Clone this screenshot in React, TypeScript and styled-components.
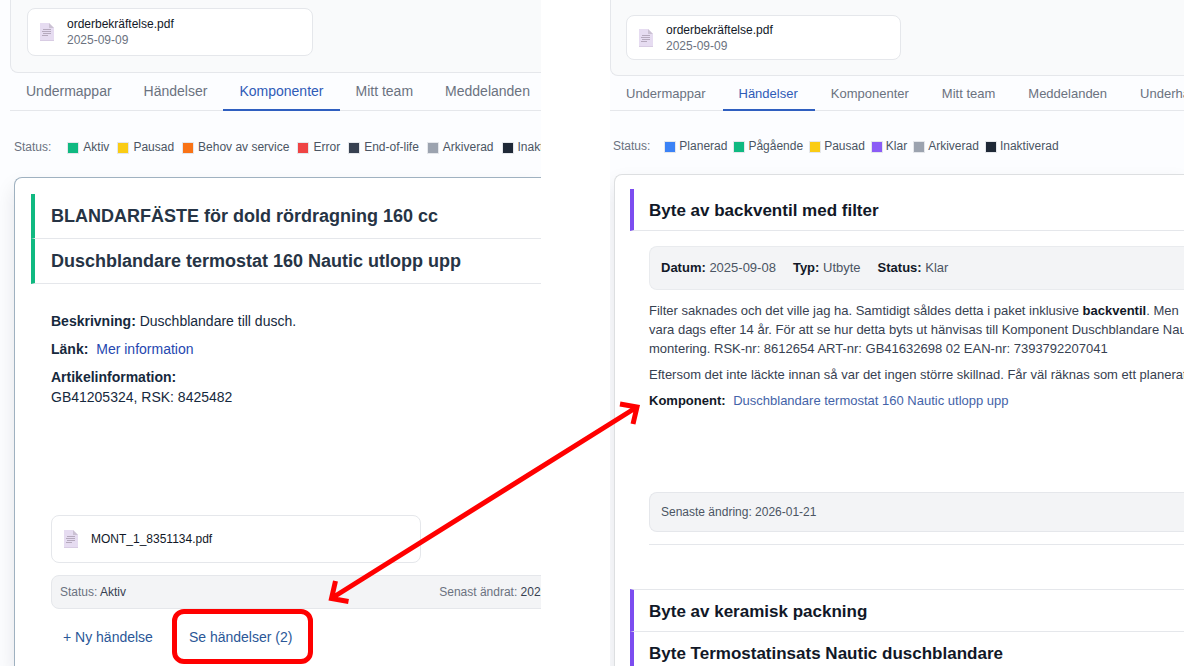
import React from "react";
import styled, { createGlobalStyle, css } from "styled-components";

const GlobalStyle = createGlobalStyle`
  *, *::before, *::after { box-sizing: border-box; }
  body {
    margin: 0;
    background: #ffffff;
    color: #1f2937;
    font-family: "Liberation Sans", Arial, sans-serif;
    font-size: 14px;
    line-height: 20px;
  }
  button { font: inherit; cursor: pointer; background: none; border: 0; padding: 0; }
  a { text-decoration: none; }
  h2, p { margin: 0; }
`;

const Stage = styled.main`
  position: relative;
  display: grid;
  grid-template-columns: minmax(0, 541fr) minmax(0, 574fr);
  column-gap: 69px;
  height: 100vh;
  overflow: hidden;
`;

/* compact panes use the slightly denser variant of every part */
type Density = { $compact?: boolean };

const Pane = styled.section<Density>`
  display: flex;
  flex-direction: column;
  min-width: 0;
  min-height: 0;
  overflow: hidden;
  background: #fcfdff;
  padding-left: ${(p) => (p.$compact ? 0 : 10)}px;
`;

const Attachments = styled.div<Density>`
  flex: none;
  padding: ${(p) => (p.$compact ? "15px 15px" : "8px 16px 16px")};
  background: #f9fafb;
  border: solid #e5e7eb;
  border-width: 0 0 1px 1px;
  border-bottom-left-radius: 8px;
`;

const FileCard = styled.a<{ $width: number; $height: number }>`
  display: flex;
  align-items: center;
  gap: 13px;
  width: ${(p) => p.$width}px;
  height: ${(p) => p.$height}px;
  padding-left: 12px;
  background: #ffffff;
  border: 1px solid #e5e7eb;
  border-radius: 8px;
  color: #111827;
  font-size: 12px;
  line-height: 16px;
`;

const FileText = styled.span`
  display: flex;
  flex-direction: column;
`;

const FileDate = styled.span`
  color: #6b7280;
`;

const Tabs = styled.nav<Density>`
  flex: none;
  display: flex;
  height: ${(p) => (p.$compact ? 35 : 38)}px;
  border-bottom: 1px solid #e5e7eb;
  font-size: ${(p) => (p.$compact ? 13 : 14)}px;
`;

const Tab = styled.button<Density & { $active?: boolean }>`
  flex: none;
  height: ${(p) => (p.$compact ? 35 : 38)}px;
  padding: ${(p) => (p.$compact ? "2px 17px 0 16px" : "0 16px")};
  border-bottom: 2px solid transparent;
  color: #6b7280;
  white-space: nowrap;
  ${(p) =>
    p.$active &&
    css`
      color: #2f5bb7;
      border-bottom-color: #2f5fc0;
    `}
`;

const Legend = styled.div<Density>`
  flex: none;
  display: flex;
  align-items: center;
  gap: ${(p) => (p.$compact ? 6 : 8)}px;
  padding: ${(p) => (p.$compact ? "27px 0 19px 3px" : "28px 0 21px 4px")};
  font-size: 12px;
  line-height: 17px;
  color: #4b5563;
  white-space: nowrap;
`;

const LegendTitle = styled.span`
  margin-right: 8px;
  color: #6b7280;
`;

const LegendItem = styled.span<Density>`
  display: flex;
  align-items: center;
  gap: ${(p) => (p.$compact ? 3 : 4)}px;
`;

const Swatch = styled.i<{ $color: string }>`
  width: 12px;
  height: 12px;
  background: ${(p) => p.$color};
  border: 1px solid #e5e7eb;
`;

const Card = styled.article<Density>`
  flex: 1 0 auto;
  margin-left: 4px;
  padding: ${(p) => (p.$compact ? "14px 0 0 15px" : "16px 0 0 16px")};
  background: #ffffff;
  border: solid ${(p) => (p.$compact ? "#dddfe1" : "#9fb1c0")};
  border-width: 1px 0 0 1px;
  border-top-left-radius: 8px;
  box-shadow: 0 10px 20px rgba(15, 23, 42, 0.1);
`;

const Entry = styled.h2<Density & { $color: string; $topLine?: boolean }>`
  padding: ${(p) => (p.$compact ? "11px 0 9px 15px" : "11px 0 11px 16px")};
  border-left: 4px solid ${(p) => p.$color};
  border-bottom: 1px solid #e5e7eb;
  border-top: ${(p) => (p.$topLine ? "1px solid #e5e7eb" : "0")};
  color: ${(p) => (p.$compact ? "#111827" : "#263445")};
  font-size: ${(p) => (p.$compact ? 17 : 18)}px;
  line-height: ${(p) => (p.$compact ? 21 : 22)}px;
  font-weight: 700;
  white-space: nowrap;
`;

const Details = styled.div<Density>`
  display: flex;
  flex-direction: column;
  padding-left: ${(p) => (p.$compact ? 19 : 20)}px;
`;

const Facts = styled.div`
  display: flex;
  flex-direction: column;
  gap: 8px;
  padding-top: 27px;
  min-height: 231px;
  color: #16293d;
`;

const TextLink = styled.a`
  margin-left: 4px;
  color: #2547b0;
`;

const StatusBar = styled.div`
  display: flex;
  justify-content: space-between;
  margin: 12px -50px 0 0;
  padding: 8px;
  border: 1px solid #e5e7eb;
  border-radius: 8px;
  background: #f3f4f6;
  color: #6b7280;
  font-size: 12px;
  line-height: 16px;
  white-space: nowrap;

  b {
    color: #374151;
    font-weight: 400;
  }
`;

const Actions = styled.div`
  display: flex;
  gap: 36px;
  padding: 18px 0 0 12px;
`;

const Action = styled.button`
  position: relative;
  color: #2b5797;
`;

const Highlight = styled.span`
  position: absolute;
  inset: -18px -21px -17px -17px;
  border: 5px solid #ff0000;
  border-radius: 12px;
  pointer-events: none;
`;

const EventMeta = styled.div`
  display: flex;
  gap: 17px;
  margin-top: 15px;
  padding: 12px 11px;
  background: #f3f4f6;
  border: solid #e9ebee;
  border-width: 1px 0 1px 1px;
  border-radius: 8px 0 0 8px;
  color: #4b5563;
  font-size: 13px;
  line-height: 18px;

  b {
    color: #111827;
  }
`;

const EventBody = styled.div`
  display: flex;
  flex-direction: column;
  gap: 7px;
  min-height: 202px;
  padding-top: 11px;
  color: #374151;
  font-size: 13px;
  line-height: 19px;
  white-space: nowrap;

  b {
    color: #111827;
  }
`;

const ComponentLink = styled(TextLink)`
  color: #4463a8;
`;

const Changed = styled.div`
  padding: 11px;
  background: #f3f4f6;
  border: solid #e5e7eb;
  border-width: 1px 0 1px 1px;
  border-radius: 8px 0 0 8px;
  color: #4b5563;
  font-size: 12px;
  line-height: 16px;
`;

const Divider = styled.hr`
  width: 100%;
  margin: 12px 0 44px;
  border: 0;
  border-top: 1px solid #e5e7eb;
`;

const Connector = styled.svg`
  position: absolute;
  top: 0;
  left: 0;
  width: 100%;
  pointer-events: none;
`;

const FileIcon = () => (
  <svg width="14" height="18" viewBox="0 0 14 18" aria-hidden="true">
    <path d="M0 0H9L14 5V18H0Z" fill="#e6dcf1" />
    <path d="M9 0L14 5H9Z" fill="#cbc1d3" />
    <path d="M0 17.5H14" stroke="#d8cce3" />
    <path d="M3 6.5H11M2 8.5H11M3 10.5H11M2 12.5H8" stroke="#b5a9bd" />
  </svg>
);

const componentStatuses = [
  ["Aktiv", "#10b981"],
  ["Pausad", "#facc15"],
  ["Behov av service", "#f97316"],
  ["Error", "#ef4444"],
  ["End-of-life", "#374151"],
  ["Arkiverad", "#9ca3af"],
  ["Inaktiverad", "#1f2937"],
];

const eventStatuses = [
  ["Planerad", "#3b82f6"],
  ["Pågående", "#10b981"],
  ["Pausad", "#facc15"],
  ["Klar", "#8b5cf6"],
  ["Arkiverad", "#9ca3af"],
  ["Inaktiverad", "#1f2937"],
];

const tabNames = ["Undermappar", "Händelser", "Komponenter", "Mitt team", "Meddelanden"];

function TabBar({ names, active, compact }: { names: string[]; active: string; compact?: boolean }) {
  return (
    <Tabs $compact={compact}>
      {names.map((name) => (
        <Tab key={name} type="button" $compact={compact} $active={name === active}>
          {name}
        </Tab>
      ))}
    </Tabs>
  );
}

function StatusLegend({ items, compact }: { items: string[][]; compact?: boolean }) {
  return (
    <Legend $compact={compact}>
      <LegendTitle>Status:</LegendTitle>
      {items.map(([label, color]) => (
        <LegendItem key={label} $compact={compact}>
          <Swatch $color={color} />
          {label}
        </LegendItem>
      ))}
    </Legend>
  );
}

function OrderFile({ width, height }: { width: number; height: number }) {
  return (
    <FileCard href="#order" $width={width} $height={height}>
      <FileIcon />
      <FileText>
        <span>orderbekräftelse.pdf</span>
        <FileDate>2025-09-09</FileDate>
      </FileText>
    </FileCard>
  );
}

export default function App() {
  return (
    <>
      <GlobalStyle />
      <Stage>
        <Pane>
          <Attachments>
            <OrderFile width={286} height={48} />
          </Attachments>
          <TabBar names={tabNames} active="Komponenter" />
          <StatusLegend items={componentStatuses} />
          <Card>
            <Entry $color="#10b981">BLANDARFÄSTE för dold rördragning 160 cc</Entry>
            <Entry $color="#10b981">Duschblandare termostat 160 Nautic utlopp upp</Entry>
            <Details>
              <Facts>
                <p>
                  <b>Beskrivning:</b> Duschblandare till dusch.
                </p>
                <p>
                  <b>Länk:</b> <TextLink href="#info">Mer information</TextLink>
                </p>
                <p>
                  <b>Artikelinformation:</b>
                  <br />
                  GB41205324, RSK: 8425482
                </p>
              </Facts>
              <FileCard href="#mont" $width={370} $height={48}>
                <FileIcon />
                <span>MONT_1_8351134.pdf</span>
              </FileCard>
              <StatusBar>
                <span>
                  Status: <b>Aktiv</b>
                </span>
                <span>
                  Senast ändrat: <b>2026-01-21</b>
                </span>
              </StatusBar>
              <Actions>
                <Action type="button">+ Ny händelse</Action>
                <Action type="button">
                  Se händelser (2)
                  <Highlight />
                </Action>
              </Actions>
            </Details>
          </Card>
        </Pane>

        <Pane $compact>
          <Attachments $compact>
            <OrderFile width={275} height={45} />
          </Attachments>
          <TabBar names={[...tabNames, "Underhåll"]} active="Händelser" compact />
          <StatusLegend items={eventStatuses} compact />
          <Card $compact>
            <Entry $compact $color="#7c4df0">Byte av backventil med filter</Entry>
            <Details $compact>
              <EventMeta>
                <span><b>Datum:</b> 2025-09-08</span>
                <span><b>Typ:</b> Utbyte</span>
                <span><b>Status:</b> Klar</span>
              </EventMeta>
              <EventBody>
                <p>
                  Filter saknades och det ville jag ha. Samtidigt såldes detta i paket inklusive <b>backventil</b>. Men
                  <br />
                  vara dags efter 14 år. För att se hur detta byts ut hänvisas till Komponent Duschblandare Nautic
                  <br />
                  montering. RSK-nr: 8612654 ART-nr: GB41632698 02 EAN-nr: 7393792207041
                </p>
                <p>Eftersom det inte läckte innan så var det ingen större skillnad. Får väl räknas som ett planerat</p>
                <p>
                  <b>Komponent:</b> <ComponentLink href="#component">Duschblandare termostat 160 Nautic utlopp upp</ComponentLink>
                </p>
              </EventBody>
              <Changed>Senaste ändring: 2026-01-21</Changed>
              <Divider />
            </Details>
            <Entry $compact $topLine $color="#7c4df0">Byte av keramisk packning</Entry>
            <Entry $compact $color="#7c4df0">Byte Termostatinsats Nautic duschblandare</Entry>
          </Card>
        </Pane>

        <Connector viewBox="0 0 1184 666" aria-hidden="true">
          <path
            d="M332 598L637 407M335.5 581L331.5 598.5L348.5 601.5M620 404L637 407L633 424"
            fill="none"
            stroke="#ff0000"
            strokeWidth="5"
          />
        </Connector>
      </Stage>
    </>
  );
}
